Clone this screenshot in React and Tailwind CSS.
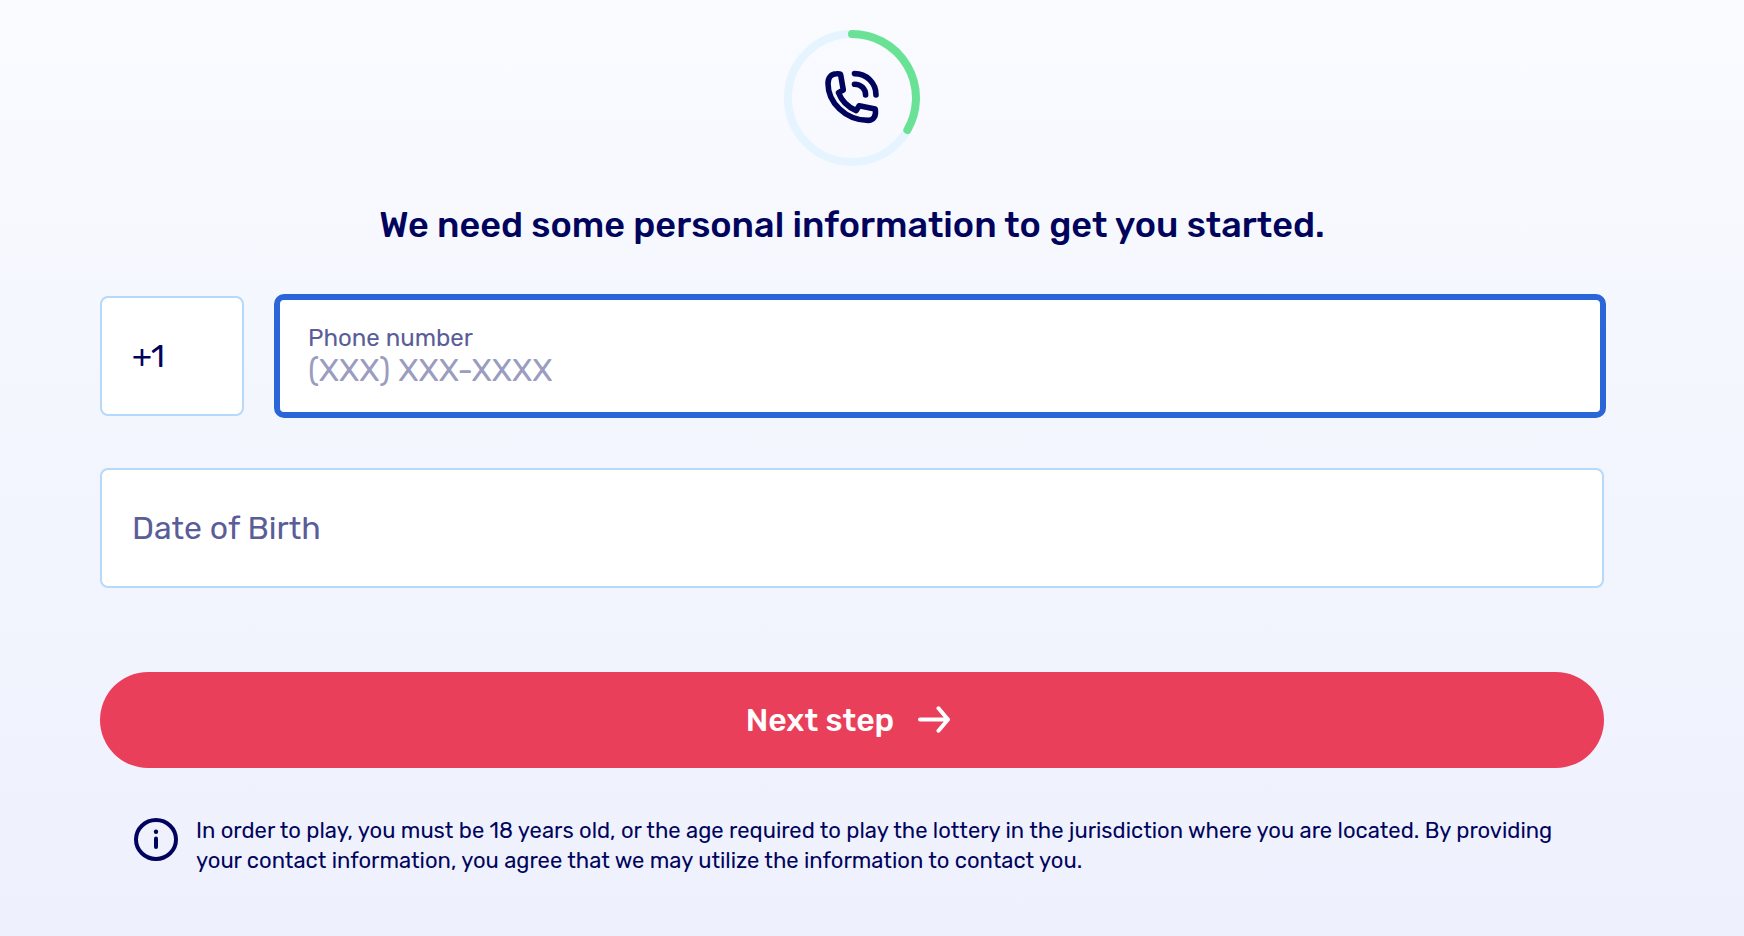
import { useState } from "react";

function StepProgress() {
    return (
        <svg viewBox="0 0 136 136" className="size-34" fill="none" strokeLinecap="round" strokeLinejoin="round" role="img" aria-label="Step 1 of 3">
            <circle cx="68" cy="68" r="64" stroke="#e5f4ff" strokeWidth="8" />
            <path d="M68 4A64 64 0 0 1 123.4 100" stroke="#6ae295" strokeWidth="8" />
            <g stroke="#00045c" strokeWidth="5.6">
                <path d="M56.6 44.6L59.3 60L54.4 62.6C57.4 70.4 64.2 77.4 72.2 80.6L75.2 75.8L91.2 79C92.6 85.8 89.5 90.4 84 90.4C61.5 90.4 44 72.5 44 53.5C44 47.5 47 44 52.5 43.8C54 43.7 56.4 43.4 56.6 44.6Z" />
                <path d="M70.5 43.6C82.5 43.6 92 52.8 92 65" />
                <path d="M70.5 54.2C77 54.2 81.6 58.8 81.6 65" />
            </g>
        </svg>
    )
}

export default function PersonalInfo() {
    const [code, setCode] = useState("+1");
    const [phone, setPhone] = useState("");
    const [birth, setBirth] = useState("");

    return (
        <main className="min-h-screen bg-linear-to-b from-[#f9fbff] to-[#eef0fd] pl-25 pr-35 pt-7.5 pb-15 font-['Rubik','Roboto',sans-serif] text-[#00045c]">
            <form className="flex flex-col" onSubmit={(e) => e.preventDefault()}>
                <div className="flex justify-center">
                    <StepProgress />
                </div>
                <h1 className="mt-9 text-center text-4xl leading-11.5 font-medium">
                    We need some personal information to get you started.
                </h1>
                <div className="mt-12 flex gap-8">
                    <input
                        aria-label="Country code"
                        value={code}
                        onChange={(e) => setCode(e.target.value)}
                        className="h-30 w-36 rounded-lg border-2 border-[#b5d9f8] bg-white px-7.5 text-[32px] outline-none"
                    />
                    <div className="flex h-30 flex-1 flex-col justify-center rounded-lg border-4 border-[#2b66d9] bg-white px-7 ring-2 ring-[#2b66d9]">
                        <label htmlFor="phone" className="text-2xl leading-7 text-[#5a5d97]">Phone number</label>
                        <input
                            id="phone"
                            type="tel"
                            value={phone}
                            onChange={(e) => setPhone(e.target.value)}
                            placeholder="(XXX) XXX-XXXX"
                            className="h-9 w-full text-[32px] leading-9 outline-none placeholder:text-[#9a9cc0]"
                        />
                    </div>
                </div>
                <input
                    aria-label="Date of Birth"
                    value={birth}
                    onChange={(e) => setBirth(e.target.value)}
                    placeholder="Date of Birth"
                    className="mt-13 h-30 w-full rounded-lg border-2 border-[#b5d9f8] bg-white px-7.5 text-[32px] outline-none placeholder:text-[#5a5d97]"
                />
                <button type="submit" className="mt-21 flex h-24 w-full items-center justify-center gap-5 rounded-full bg-[#ea3f5b] text-[32px] font-medium text-white">
                    Next step
                    <svg viewBox="0 0 44 28" className="h-7 w-11" fill="none" stroke="currentColor" strokeWidth="4" strokeLinecap="round" strokeLinejoin="round">
                        <path d="M6 13.5H34M24.5 2.3L34 13.5L24.5 24.7" />
                    </svg>
                </button>
                <div className="mt-12 flex gap-4.5 px-8.5">
                    <svg viewBox="0 0 44 44" className="mt-0.5 size-11 shrink-0" fill="none" stroke="currentColor" strokeWidth="4" strokeLinecap="round">
                        <ellipse cx="22" cy="21.5" rx="20" ry="19.5" />
                        <path d="M22 20.5V29" />
                        <circle cx="22" cy="13.8" r="2.2" fill="currentColor" stroke="none" />
                    </svg>
                    <p className="text-[22px] leading-7.5">
                        In order to play, you must be 18 years old, or the age required to play the lottery in the jurisdiction where you are located. By providing your contact information, you agree that we may utilize the information to contact you.
                    </p>
                </div>
            </form>
        </main>
    )
}
